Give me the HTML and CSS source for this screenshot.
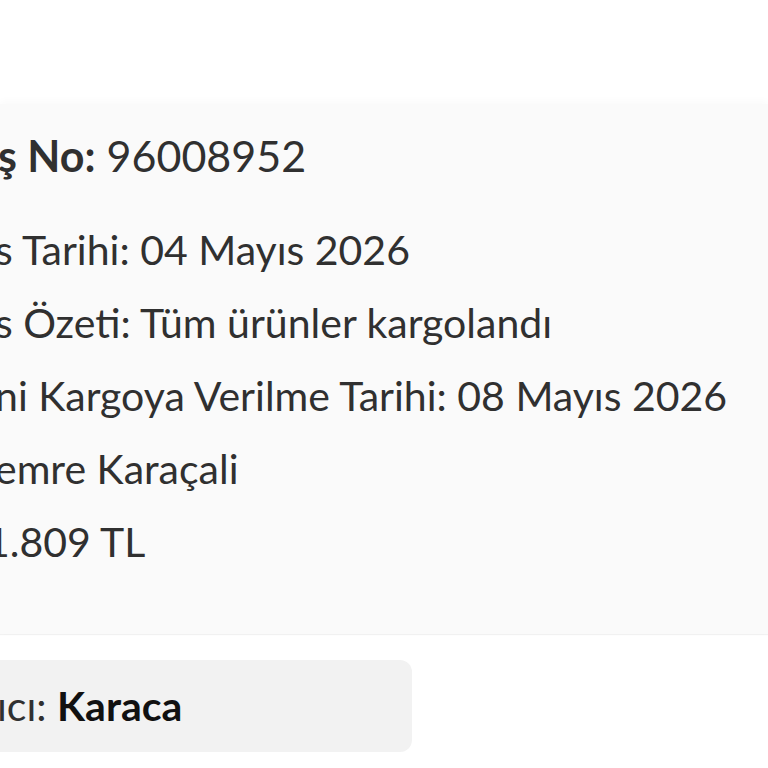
FILE: index.html
```html
<!DOCTYPE html>
<html lang="tr">
<head>
<meta charset="utf-8">
<link rel="stylesheet" href="styles.css">
</head>
<body>
<div class="page">
  <section class="card">
    <p class="row row-first"><b>ş No:</b> 96008952</p>
    <p class="row">s Tarihi: 04 Mayıs 2026</p>
    <p class="row">s Özeti: Tüm ürünler kargolandı</p>
    <p class="row">ni Kargoya Verilme Tarihi: 08 Mayıs 2026</p>
    <p class="row">emre Karaçali</p>
    <p class="row row-total">1.809 TL</p>
  </section>
  <div class="seller"><span class="seller-label">ıcı:</span> <b>Karaca</b></div>
</div>
</body>
</html>
```
FILE: styles.css
```css
html, body {
  margin: 0;
  padding: 0;
  background: #ffffff;
  overflow: hidden;
  width: 768px;
  height: 768px;
}
body {
  font-family: "Lato", "Noto Sans", sans-serif;
  color: #303030;
}
.page {
  padding-top: 104px;
}
.card {
  background: #fafafa;
  box-shadow: 0 -3px 8px rgba(0,0,0,0.025), 0 1px 1px rgba(0,0,0,0.05);
  padding: 15px 0 0 0;
  height: 530px;
  box-sizing: border-box;
}
.row {
  margin: 0;
  font-size: 41px;
  line-height: 73px;
  white-space: nowrap;
  text-indent: -5px;
  color: #303030;
}
.row-first {
  font-size: 43px;
  margin-bottom: 21px;
  text-indent: -2px;
}
.row b { font-weight: 700; color: #303030; }
.row-total {
  text-indent: -14px;
}
.seller {
  margin-top: 26px;
  width: 412px;
  height: 92px;
  box-sizing: border-box;
  background: #f2f2f2;
  border-radius: 0 12px 12px 0;
  font-size: 41px;
  line-height: 92px;
  color: #303030;
  white-space: nowrap;
  text-indent: -3px;
}
.seller b { color: #111; font-weight: 700; }
```
